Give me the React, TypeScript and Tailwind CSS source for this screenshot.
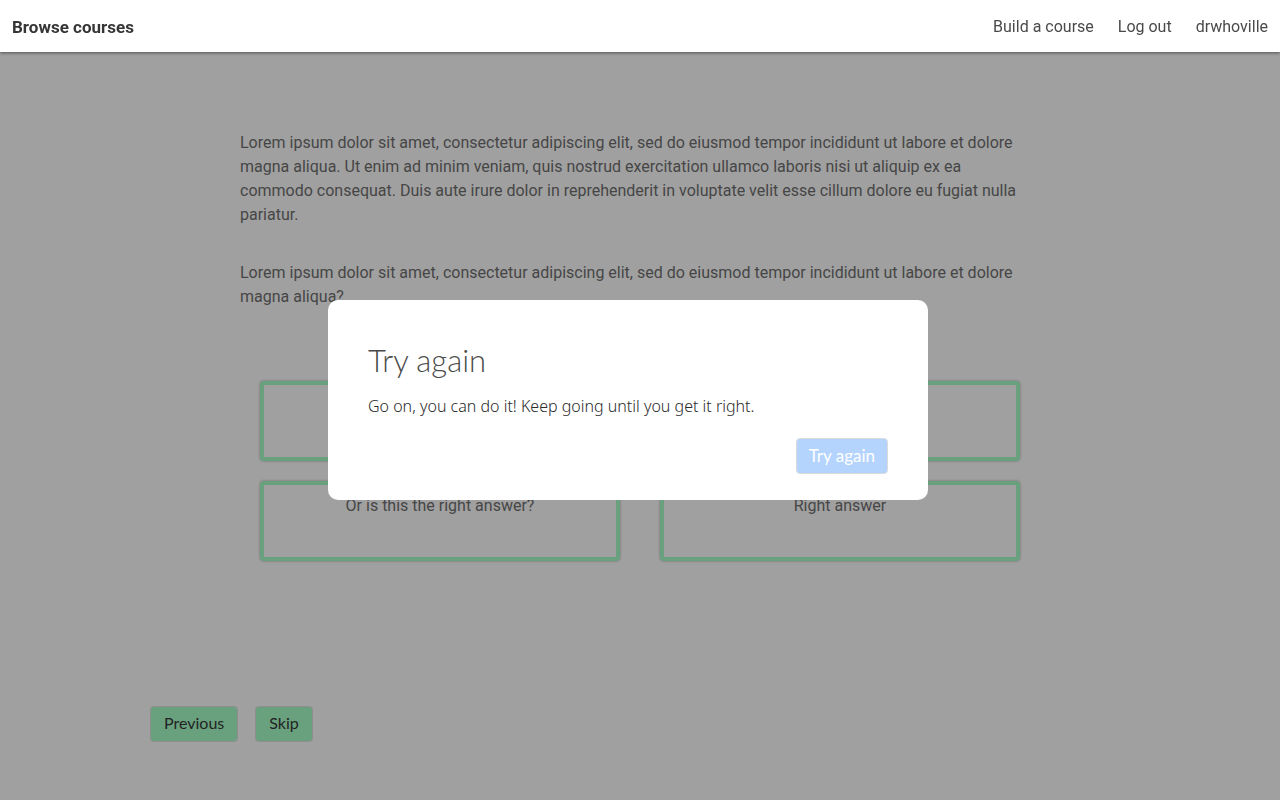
import type { ReactNode } from "react";

const answers = [
  "Is this the right answer?",
  "Maybe this one?",
  "Or is this the right answer?",
  "Right answer",
];

function Answer({ children }: { children: ReactNode }) {
  return (
    <button
      type="button"
      className="flex h-20 items-start justify-center rounded-sm border-4 border-[#90ffbb] bg-white pt-[9px] shadow-[0_0_2px_1px_rgba(10,10,10,0.2)]"
    >
      {children}
    </button>
  );
}

function StepButton({ children }: { children: ReactNode }) {
  return (
    <button
      type="button"
      className="h-9 rounded-[4px] border border-[#dbdbdb] bg-[#90ffbb] px-[13px] pb-0.5 font-[Lato,sans-serif] text-[16px] leading-6 text-black"
    >
      {children}
    </button>
  );
}

export default function App() {
  return (
    <div className="min-h-screen bg-white font-[Roboto,sans-serif] text-base leading-6 text-[#4a4a4a]">
      <header className="relative z-20 flex h-[52px] items-center justify-between bg-white px-3 pt-px shadow-[0_1px_3px_rgba(10,10,10,0.5)]">
        <a href="#courses" className="text-[17px] font-bold text-[#363636]">
          Browse courses
        </a>
        <nav className="flex gap-6">
          <a href="#build">Build a course</a>
          <a href="#logout">Log out</a>
          <a href="#profile">drwhoville</a>
        </nav>
      </header>

      <main className="mx-auto max-w-[980px] pt-[79px] pb-14">
        <div className="mx-auto max-w-[800px]">
          <p className="pr-2">
            Lorem ipsum dolor sit amet, consectetur adipiscing elit, sed do
            eiusmod tempor incididunt ut labore et dolore magna aliqua. Ut enim
            ad minim veniam, quis nostrud exercitation ullamco laboris nisi ut
            aliquip ex ea commodo consequat. Duis aute irure dolor in
            reprehenderit in voluptate velit esse cillum dolore eu fugiat nulla
            pariatur.
          </p>
          <p className="mt-[34px] pr-2">
            Lorem ipsum dolor sit amet, consectetur adipiscing elit, sed do
            eiusmod tempor incididunt ut labore et dolore magna aliqua?
          </p>
          <div className="mt-[72px] grid grid-cols-2 gap-x-10 gap-y-5 px-5">
            {answers.map((a) => (
              <Answer key={a}>{a}</Answer>
            ))}
          </div>
        </div>
        <div className="mt-[145px] flex gap-[17px]">
          <StepButton>Previous</StepButton>
          <StepButton>Skip</StepButton>
        </div>
      </main>

      <div className="fixed inset-0 z-10 flex items-center justify-center bg-[rgba(65,65,65,0.5)] pr-6">
        <section
          role="dialog"
          aria-modal="true"
          aria-labelledby="dialog-title"
          className="w-full max-w-[600px] rounded-[10px] bg-white px-10 pt-10 pb-[26px] font-[Lato,sans-serif]"
        >
          <h1 id="dialog-title" className="text-[31px] leading-10 font-light">
            Try again
          </h1>
          <p className="mt-[14px] font-['Noto_Sans',sans-serif] text-[16px] leading-6 font-light text-[#2a2a2a]">
            Go on, you can do it! Keep going until you get it right.
          </p>
          <div className="mt-5 flex justify-end">
            <button
              type="button"
              className="h-9 rounded-[4px] border border-[#dbdbdb] bg-[#b4d4fe] px-3 text-[17px] leading-6 text-white"
            >
              Try again
            </button>
          </div>
        </section>
      </div>
    </div>
  );
}
